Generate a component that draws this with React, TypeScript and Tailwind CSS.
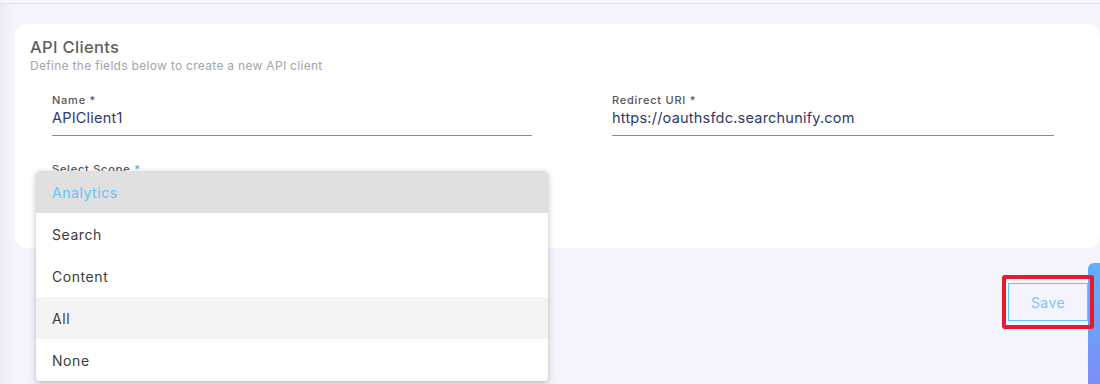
import React from 'react';

const font = { fontFamily: '"Inter", "Noto Sans", sans-serif' };

const scopes = ['Analytics', 'Search', 'Content', 'All', 'None'];

function Field({ label, value, className }: { label: string; value: string; className?: string }) {
  return (
    <div className={className}>
      <div className="text-[11px] font-medium tracking-[0.07em] text-[#555] leading-[14px]">{label}</div>
      <div className="mt-[1px] text-[14.5px] tracking-[0.015em] text-[#2f3966] leading-[20px] pb-[7px] border-b border-[#8c8c8c]">
        {value}
      </div>
    </div>
  );
}

export default function App() {
  return (
    <div style={font} className="relative w-[1100px] h-[384px] overflow-hidden bg-[#f4f4fd]">
      <div className="h-[4px] bg-[#f6f6f8] border-b border-[#e3e3ea]" />
      <div className="absolute left-0 top-[4px] bottom-0 w-[12px] bg-gradient-to-r from-[#ececf4] to-[#f4f4fd]" />

      {/* floating tab on the right edge */}
      <div className="absolute right-0 top-[263px] w-[12px] h-[121px] rounded-tl-[6px] bg-gradient-to-b from-[#5fb0fb] to-[#7a8ef6]" />

      <div className="relative pl-[15px] pt-[20px]">
        <div className="bg-white rounded-[12px] h-[224px] px-[15px] pt-[12px]">
          <div className="text-[16.5px] font-medium tracking-[0.02em] text-[#655f5b] leading-[22px]">API Clients</div>
          <div className="text-[12px] tracking-[0.025em] text-[#a4a4ac] leading-[15px]">
            Define the fields below to create a new API client
          </div>

          <div className="flex pl-[22px] mt-[20px]">
            <Field label="Name *" value="APIClient1" className="w-[480px]" />
            <Field label="Redirect URI *" value="https://oauthsfdc.searchunify.com" className="w-[442px] ml-[80px]" />
          </div>

          <div className="pl-[22px] mt-[26px] text-[11px] font-medium tracking-[0.07em] text-[#555] leading-[14px]">
            Select Scope <span className="text-[#3fb3f0]">*</span>
          </div>
        </div>

        <div className="flex justify-end pr-[6px] mt-[27px]">
          <div className="relative z-10 border-[4px] border-[#e8192c] rounded-[3px] px-[2px] py-[4px]">
            <button className="block w-[80px] h-[38px] border border-[#68c5f5] text-[#7cc6f2] text-[14px] tracking-[0.03em] bg-transparent">
              Save
            </button>
          </div>
        </div>
      </div>

      <div className="absolute z-20 left-[36px] top-[171px] w-[512px] bg-white rounded-[4px] shadow-[0_2px_6px_rgba(0,0,0,0.25)] overflow-hidden">
        {scopes.map((s) => (
          <div
            key={s}
            className={
              s === 'Analytics'
                ? 'h-[42px] flex items-center px-[16px] text-[14px] tracking-[0.04em] bg-[#e0e0e0] text-[#5ec5f7]'
                : s === 'All'
                ? 'h-[42px] flex items-center px-[16px] text-[14px] tracking-[0.04em] bg-[#f4f4f4] text-[#3c3c3c]'
                : 'h-[42px] flex items-center px-[16px] text-[14px] tracking-[0.04em] text-[#3c3c3c]'
            }
          >
            {s}
          </div>
        ))}
      </div>
    </div>
  );
}
